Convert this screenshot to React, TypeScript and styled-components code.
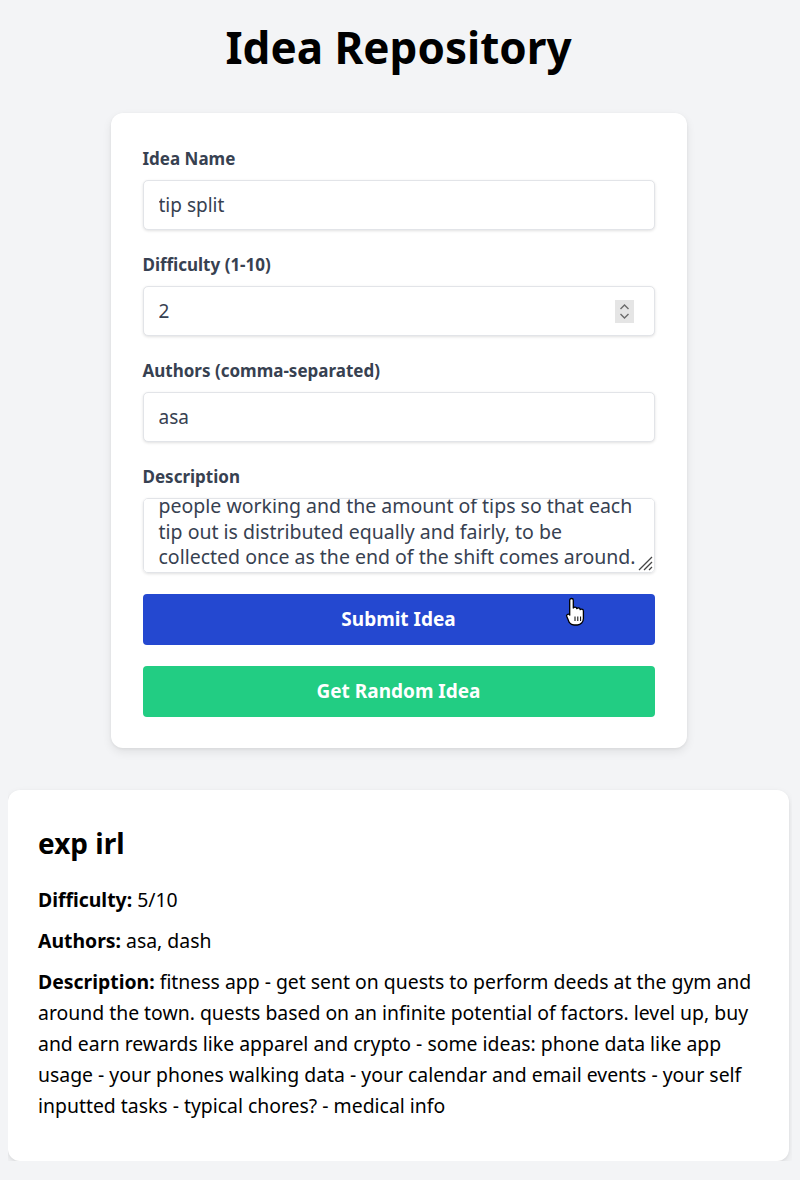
import React, { useLayoutEffect, useRef } from "react";
import styled, { createGlobalStyle } from "styled-components";

const GlobalStyle = createGlobalStyle`
  html, body {
    background: #f3f4f6;
  }
  body {
    margin: 8px;
    font-family: "Noto Sans", "Open Sans", sans-serif;
    color: #000;
  }
  * { box-sizing: border-box; }
`;

const Page = styled.div`
  display: flex;
  flex-direction: column;
  align-items: center;
  margin-right: 3px;
`;

const Title = styled.h1`
  margin: 13px 0 39px;
  font-size: 44px;
  line-height: 1.2;
  font-weight: 700;
  color: #000;
  text-align: center;
`;

const FormCard = styled.form`
  width: 576px;
  background: #fff;
  border-radius: 12px;
  padding: 32px 32px 31px;
  box-shadow: 0 4px 10px rgba(0, 0, 0, 0.08), 0 1px 3px rgba(0, 0, 0, 0.06);
  display: flex;
  flex-direction: column;
`;

const Field = styled.div`
  display: flex;
  flex-direction: column;
  margin-bottom: 21px;
`;

const Label = styled.label`
  display: block;
  font-size: 17px;
  line-height: 24px;
  font-weight: 700;
  color: #374151;
  padding-top: 2px;
  margin-bottom: 9px;
`;

const inputBase = `
  width: 100%;
  border: 1px solid #e2e4e8;
  border-radius: 5px;
  background: #fff;
  font-family: "Noto Sans", "Open Sans", sans-serif;
  font-size: 19px;
  color: #374151;
  box-shadow: 0 1px 3px rgba(0, 0, 0, 0.12);
  outline: none;
`;

const TextInput = styled.input`
  ${inputBase}
  height: 50px;
  padding: 0 15px;
  appearance: textfield;
  -moz-appearance: textfield;

  &::-webkit-inner-spin-button,
  &::-webkit-outer-spin-button {
    -webkit-appearance: none;
    margin: 0;
  }
`;

const ControlWrap = styled.div`
  position: relative;
`;

const SpinBox = styled.div`
  position: absolute;
  right: 21px;
  top: 14px;
  width: 19px;
  height: 23px;
  background: #e5e5e5;
  display: flex;
  align-items: center;
  justify-content: center;
  pointer-events: none;
`;

const TextArea = styled.textarea`
  ${inputBase}
  display: block;
  height: 75px;
  font-size: 19.5px;
  padding: 12px 15px 2px;
  line-height: 25.5px;
  resize: vertical;
  scrollbar-width: none;
  &::-webkit-scrollbar { display: none; }
  &::-webkit-resizer { background: transparent; }
`;

const Grip = styled.svg`
  position: absolute;
  right: 2px;
  bottom: 2px;
  pointer-events: none;
`;

const Button = styled.button<{ $tone: "blue" | "green" }>`
  width: 100%;
  height: 51px;
  border: none;
  border-radius: 4px;
  background: ${(p) => (p.$tone === "blue" ? "#2448d0" : "#22cd83")};
  color: #fff;
  font-family: "Noto Sans", "Open Sans", sans-serif;
  font-size: 19px;
  font-weight: 700;
  cursor: pointer;
`;

const Gap = styled.div`
  height: 21px;
`;

const Cursor = styled.svg`
  position: absolute;
  left: 421px;
  top: 3px;
  pointer-events: none;
`;

const ResultCard = styled.section`
  align-self: stretch;
  margin-top: 42px;
  background: #fff;
  border-radius: 12px;
  padding: 30px;
  box-shadow: 0 4px 10px rgba(0, 0, 0, 0.08), 0 1px 3px rgba(0, 0, 0, 0.06);
`;

const ResultTitle = styled.h2`
  margin: 5px 0 23px;
  font-size: 28px;
  line-height: 1.3;
  font-weight: 700;
  color: #000;
`;

const Line = styled.p`
  margin: 0 0 10px;
  font-size: 19.4px;
  line-height: 31px;
  color: #000;
`;

const descriptionText =
  "A tip calculator that takes in the total number of\npeople working and the amount of tips so that each tip out is distributed equally and fairly, to be collected once as the end of the shift comes around.";

function HandCursor() {
  return (
    <Cursor width="24" height="31" viewBox="0 0 24 31">
      <path
        d="M7.5 1.5c1 0 1.8.8 1.8 1.8V11c.3-.6 1-.9 1.7-.9 1 0 1.7.7 1.8 1.6.3-.5.9-.8 1.6-.8 1 0 1.8.8 1.8 1.8.3-.4.8-.6 1.4-.6 1 0 1.8.8 1.8 1.8V21.5c0 3.5-2.7 6.5-6 6.5h-3.4c-2 0-3.4-.8-4.6-2.3L3 20.1c-.6-.8-.5-1.9.3-2.5.8-.6 1.9-.5 2.5.3l-.1.2V3.3c0-1 .8-1.8 1.8-1.8z"
        fill="#fff"
        stroke="#000"
        strokeWidth="1.3"
        strokeLinejoin="round"
      />
      <path d="M11 19.5v4.5M13.8 19.5v4.5M16.6 19.5v4.5" stroke="#000" strokeWidth="1" />
    </Cursor>
  );
}

function Stepper() {
  return (
    <SpinBox>
      <svg width="11" height="17" viewBox="0 0 11 17">
        <path d="M1.5 6 5.5 2l4 4M1.5 11l4 4 4-4" fill="none" stroke="#6b6b6b" strokeWidth="1.4" />
      </svg>
    </SpinBox>
  );
}

function ResizeGrip() {
  return (
    <Grip width="17" height="17" viewBox="0 0 17 17">
      <path d="M16 3 3 16M16 8 8 16M16 13 13 16" stroke="#444" strokeWidth="1.3" />
    </Grip>
  );
}

export default function App() {
  const areaRef = useRef<HTMLTextAreaElement>(null);
  useLayoutEffect(() => {
    const el = areaRef.current;
    if (el) el.scrollTop = el.scrollHeight;
  }, []);

  return (
    <>
      <GlobalStyle />
      <Page>
        <Title>Idea Repository</Title>
        <FormCard onSubmit={(e) => e.preventDefault()}>
          <Field>
            <Label htmlFor="name">Idea Name</Label>
            <TextInput id="name" type="text" defaultValue="tip split" />
          </Field>
          <Field>
            <Label htmlFor="difficulty">Difficulty (1-10)</Label>
            <ControlWrap>
              <TextInput id="difficulty" type="number" min={1} max={10} defaultValue={2} />
              <Stepper />
            </ControlWrap>
          </Field>
          <Field>
            <Label htmlFor="authors">Authors (comma-separated)</Label>
            <TextInput id="authors" type="text" defaultValue="asa" />
          </Field>
          <Field>
            <Label htmlFor="description">Description</Label>
            <ControlWrap>
              <TextArea id="description" ref={areaRef} defaultValue={descriptionText} />
              <ResizeGrip />
            </ControlWrap>
          </Field>
          <ControlWrap>
            <Button type="submit" $tone="blue">Submit Idea</Button>
            <HandCursor />
          </ControlWrap>
          <Gap />
          <Button type="button" $tone="green">Get Random Idea</Button>
        </FormCard>
        <ResultCard>
          <ResultTitle>exp irl</ResultTitle>
          <Line>
            <strong>Difficulty:</strong> 5/10
          </Line>
          <Line>
            <strong>Authors:</strong> asa, dash
          </Line>
          <Line>
            <strong>Description:</strong> fitness app - get sent on quests to perform deeds at the gym and around the town. quests based on an infinite potential of factors. level up, buy and earn rewards like apparel and crypto - some ideas: phone data like app usage - your phones walking data - your calendar and email events - your self inputted tasks - typical chores? - medical info
          </Line>
        </ResultCard>
      </Page>
    </>
  );
}
